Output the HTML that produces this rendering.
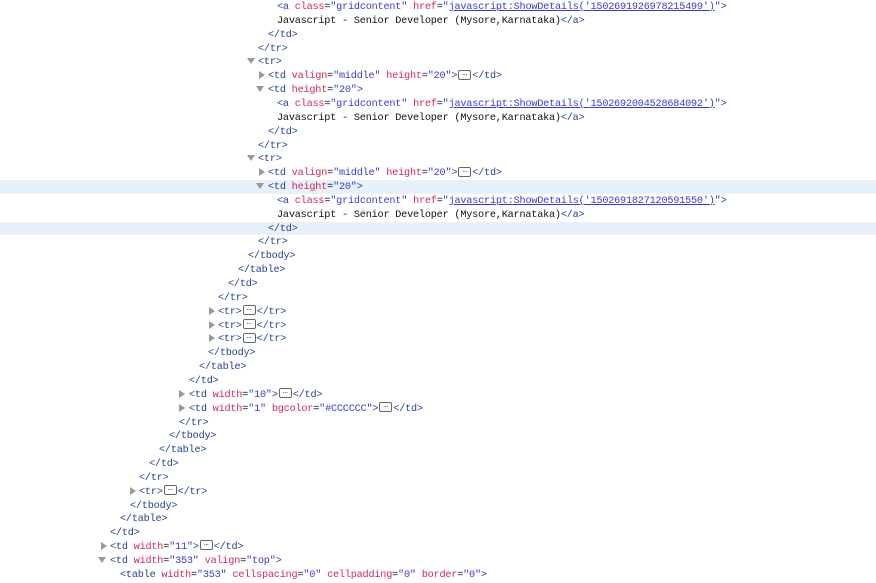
<!DOCTYPE html>
<html><head><meta charset="utf-8"><style>
html,body{margin:0;padding:0;background:#fff;width:876px;height:574px;overflow:hidden}
.l{position:absolute;left:0;width:876px;height:13.85px;line-height:13.85px;font-family:"Liberation Mono",monospace;font-size:10.2px;letter-spacing:-0.2px;white-space:pre;color:#111}
.l span.c{position:absolute;top:1px}
.hl{background:#e8f0fa}
.t{color:#243f8f}
.a{color:#d1295b}
.v{color:#3a3ad0}
.u{color:#3a3ad0;text-decoration:underline}
.tri{position:absolute;width:0;height:0}
.rt{border-top:4px solid transparent;border-bottom:4px solid transparent;border-left:6px solid #999;top:2px}
.dn{border-left:4px solid transparent;border-right:4px solid transparent;border-top:6px solid #999;top:3px}
.e{display:inline-block;width:11px;height:8px;border:1px solid #666;border-radius:2px;vertical-align:middle;position:relative;top:-1px;margin:0 1px;font-size:8px;line-height:5px;text-align:center;color:#333;letter-spacing:0}
</style></head><body>
<div class="l" style="top:0px"><span class="c" style="left:277px"><span class="t">&lt;a </span><span class="a">class</span>=<span class="v">"gridcontent"</span> <span class="a">href</span>=<span class="v">"</span><span class="u">javascript:ShowDetails('1502691926978215499')</span><span class="v">"</span><span class="t">&gt;</span></span></div>
<div class="l" style="top:13.85px"><span class="c" style="left:277px">Javascript - Senior Developer (Mysore,Karnataka)<span class="t">&lt;/a&gt;</span></span></div>
<div class="l" style="top:27.7px"><span class="c t" style="left:268px">&lt;/td&gt;</span></div>
<div class="l" style="top:41.55px"><span class="c t" style="left:258px">&lt;/tr&gt;</span></div>
<div class="l" style="top:55.4px"><span class="tri dn" style="left:247px"></span><span class="c t" style="left:258px">&lt;tr&gt;</span></div>
<div class="l" style="top:69.25px"><span class="tri rt" style="left:259px"></span><span class="c" style="left:268px"><span class="t">&lt;td </span><span class="a">valign</span>=<span class="v">"middle"</span> <span class="a">height</span>=<span class="v">"20"</span><span class="t">&gt;</span><span class="e">…</span><span class="t">&lt;/td&gt;</span></span></div>
<div class="l" style="top:83.1px"><span class="tri dn" style="left:256px"></span><span class="c" style="left:268px"><span class="t">&lt;td </span><span class="a">height</span>=<span class="v">"20"</span><span class="t">&gt;</span></span></div>
<div class="l" style="top:96.95px"><span class="c" style="left:277px"><span class="t">&lt;a </span><span class="a">class</span>=<span class="v">"gridcontent"</span> <span class="a">href</span>=<span class="v">"</span><span class="u">javascript:ShowDetails('1502692004528684092')</span><span class="v">"</span><span class="t">&gt;</span></span></div>
<div class="l" style="top:110.8px"><span class="c" style="left:277px">Javascript - Senior Developer (Mysore,Karnataka)<span class="t">&lt;/a&gt;</span></span></div>
<div class="l" style="top:124.65px"><span class="c t" style="left:268px">&lt;/td&gt;</span></div>
<div class="l" style="top:138.5px"><span class="c t" style="left:258px">&lt;/tr&gt;</span></div>
<div class="l" style="top:152.35px"><span class="tri dn" style="left:247px"></span><span class="c t" style="left:258px">&lt;tr&gt;</span></div>
<div class="l" style="top:166.2px"><span class="tri rt" style="left:259px"></span><span class="c" style="left:268px"><span class="t">&lt;td </span><span class="a">valign</span>=<span class="v">"middle"</span> <span class="a">height</span>=<span class="v">"20"</span><span class="t">&gt;</span><span class="e">…</span><span class="t">&lt;/td&gt;</span></span></div>
<div class="l hl" style="top:180.05px"><span class="tri dn" style="left:256px"></span><span class="c" style="left:268px"><span class="t">&lt;td </span><span class="a">height</span>=<span class="v">"20"</span><span class="t">&gt;</span></span></div>
<div class="l" style="top:193.9px"><span class="c" style="left:277px"><span class="t">&lt;a </span><span class="a">class</span>=<span class="v">"gridcontent"</span> <span class="a">href</span>=<span class="v">"</span><span class="u">javascript:ShowDetails('1502691827120591550')</span><span class="v">"</span><span class="t">&gt;</span></span></div>
<div class="l" style="top:207.75px"><span class="c" style="left:277px">Javascript - Senior Developer (Mysore,Karnataka)<span class="t">&lt;/a&gt;</span></span></div>
<div class="l hl" style="top:221.6px"><span class="c t" style="left:268px">&lt;/td&gt;</span></div>
<div class="l" style="top:235.45px"><span class="c t" style="left:258px">&lt;/tr&gt;</span></div>
<div class="l" style="top:249.3px"><span class="c t" style="left:248px">&lt;/tbody&gt;</span></div>
<div class="l" style="top:263.15px"><span class="c t" style="left:238px">&lt;/table&gt;</span></div>
<div class="l" style="top:277px"><span class="c t" style="left:228px">&lt;/td&gt;</span></div>
<div class="l" style="top:290.85px"><span class="c t" style="left:218px">&lt;/tr&gt;</span></div>
<div class="l" style="top:304.7px"><span class="tri rt" style="left:209px"></span><span class="c t" style="left:218px">&lt;tr&gt;<span class="e">…</span>&lt;/tr&gt;</span></div>
<div class="l" style="top:318.55px"><span class="tri rt" style="left:209px"></span><span class="c t" style="left:218px">&lt;tr&gt;<span class="e">…</span>&lt;/tr&gt;</span></div>
<div class="l" style="top:332.4px"><span class="tri rt" style="left:209px"></span><span class="c t" style="left:218px">&lt;tr&gt;<span class="e">…</span>&lt;/tr&gt;</span></div>
<div class="l" style="top:346.25px"><span class="c t" style="left:208px">&lt;/tbody&gt;</span></div>
<div class="l" style="top:360.1px"><span class="c t" style="left:199px">&lt;/table&gt;</span></div>
<div class="l" style="top:373.95px"><span class="c t" style="left:189px">&lt;/td&gt;</span></div>
<div class="l" style="top:387.8px"><span class="tri rt" style="left:179px"></span><span class="c" style="left:189px"><span class="t">&lt;td </span><span class="a">width</span>=<span class="v">"10"</span><span class="t">&gt;</span><span class="e">…</span><span class="t">&lt;/td&gt;</span></span></div>
<div class="l" style="top:401.65px"><span class="tri rt" style="left:179px"></span><span class="c" style="left:189px"><span class="t">&lt;td </span><span class="a">width</span>=<span class="v">"1"</span> <span class="a">bgcolor</span>=<span class="v">"#CCCCCC"</span><span class="t">&gt;</span><span class="e">…</span><span class="t">&lt;/td&gt;</span></span></div>
<div class="l" style="top:415.5px"><span class="c t" style="left:179px">&lt;/tr&gt;</span></div>
<div class="l" style="top:429.35px"><span class="c t" style="left:169px">&lt;/tbody&gt;</span></div>
<div class="l" style="top:443.2px"><span class="c t" style="left:159px">&lt;/table&gt;</span></div>
<div class="l" style="top:457.05px"><span class="c t" style="left:149px">&lt;/td&gt;</span></div>
<div class="l" style="top:470.9px"><span class="c t" style="left:139px">&lt;/tr&gt;</span></div>
<div class="l" style="top:484.75px"><span class="tri rt" style="left:130px"></span><span class="c t" style="left:139px">&lt;tr&gt;<span class="e">…</span>&lt;/tr&gt;</span></div>
<div class="l" style="top:498.6px"><span class="c t" style="left:130px">&lt;/tbody&gt;</span></div>
<div class="l" style="top:512.45px"><span class="c t" style="left:120px">&lt;/table&gt;</span></div>
<div class="l" style="top:526.3px"><span class="c t" style="left:110px">&lt;/td&gt;</span></div>
<div class="l" style="top:540.15px"><span class="tri rt" style="left:101px"></span><span class="c" style="left:110px"><span class="t">&lt;td </span><span class="a">width</span>=<span class="v">"11"</span><span class="t">&gt;</span><span class="e">…</span><span class="t">&lt;/td&gt;</span></span></div>
<div class="l" style="top:554px"><span class="tri dn" style="left:98px"></span><span class="c" style="left:110px"><span class="t">&lt;td </span><span class="a">width</span>=<span class="v">"353"</span> <span class="a">valign</span>=<span class="v">"top"</span><span class="t">&gt;</span></span></div>
<div class="l" style="top:567.85px"><span class="c" style="left:120px"><span class="t">&lt;table </span><span class="a">width</span>=<span class="v">"353"</span> <span class="a">cellspacing</span>=<span class="v">"0"</span> <span class="a">cellpadding</span>=<span class="v">"0"</span> <span class="a">border</span>=<span class="v">"0"</span><span class="t">&gt;</span></span></div>
</body></html>
